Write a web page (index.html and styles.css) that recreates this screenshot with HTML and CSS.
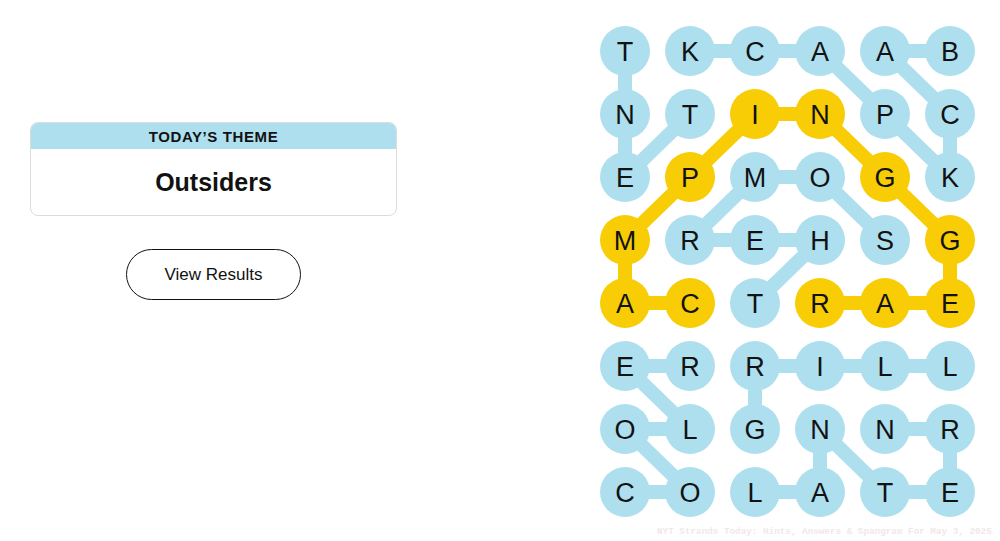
FILE: index.html
```html
<!DOCTYPE html>
<html lang="en">
<head>
<meta charset="utf-8">
<title>Strands</title>
<link rel="stylesheet" href="styles.css">
</head>
<body>
<div class="page">
  <section class="side">
    <div class="theme-card">
      <div class="theme-head">TODAY’S THEME</div>
      <div class="theme-body">Outsiders</div>
    </div>
    <button class="results-btn">View Results</button>
  </section>
  <section class="board">
    <svg class="grid" width="405" height="524" viewBox="0 0 405 524">
      <g class="links-blue">
        <line x1="30" y1="51" x2="30" y2="114"/>
        <line x1="95" y1="51" x2="160" y2="51"/>
        <line x1="160" y1="51" x2="225" y2="51"/>
        <line x1="225" y1="51" x2="290" y2="114"/>
        <line x1="290" y1="51" x2="355" y2="51"/>
        <line x1="290" y1="51" x2="355" y2="114"/>
        <line x1="30" y1="114" x2="30" y2="177"/>
        <line x1="95" y1="114" x2="30" y2="177"/>
        <line x1="290" y1="114" x2="355" y2="177"/>
        <line x1="355" y1="114" x2="355" y2="177"/>
        <line x1="160" y1="177" x2="225" y2="177"/>
        <line x1="160" y1="177" x2="95" y2="240"/>
        <line x1="225" y1="177" x2="290" y2="240"/>
        <line x1="95" y1="240" x2="160" y2="240"/>
        <line x1="160" y1="240" x2="225" y2="240"/>
        <line x1="225" y1="240" x2="160" y2="303"/>
        <line x1="30" y1="366" x2="95" y2="366"/>
        <line x1="30" y1="366" x2="95" y2="429"/>
        <line x1="160" y1="366" x2="355" y2="366"/>
        <line x1="160" y1="366" x2="160" y2="429"/>
        <line x1="30" y1="429" x2="95" y2="429"/>
        <line x1="30" y1="429" x2="95" y2="492"/>
        <line x1="225" y1="429" x2="225" y2="492"/>
        <line x1="225" y1="429" x2="290" y2="492"/>
        <line x1="290" y1="429" x2="355" y2="429"/>
        <line x1="355" y1="429" x2="355" y2="492"/>
        <line x1="30" y1="492" x2="95" y2="492"/>
        <line x1="160" y1="492" x2="225" y2="492"/>
        <line x1="290" y1="492" x2="355" y2="492"/>
      </g>
      <polyline class="link-gold" points="95,303 30,303 30,240 95,177 160,114 225,114 290,177 355,240 355,303 290,303 225,303"/>
      <g class="cells">
        <circle cx="30" cy="51" r="25"/><circle cx="95" cy="51" r="25"/><circle cx="160" cy="51" r="25"/><circle cx="225" cy="51" r="25"/><circle cx="290" cy="51" r="25"/><circle cx="355" cy="51" r="25"/>
        <circle cx="30" cy="114" r="25"/><circle cx="95" cy="114" r="25"/><circle class="gold" cx="160" cy="114" r="25"/><circle class="gold" cx="225" cy="114" r="25"/><circle cx="290" cy="114" r="25"/><circle cx="355" cy="114" r="25"/>
        <circle cx="30" cy="177" r="25"/><circle class="gold" cx="95" cy="177" r="25"/><circle cx="160" cy="177" r="25"/><circle cx="225" cy="177" r="25"/><circle class="gold" cx="290" cy="177" r="25"/><circle cx="355" cy="177" r="25"/>
        <circle class="gold" cx="30" cy="240" r="25"/><circle cx="95" cy="240" r="25"/><circle cx="160" cy="240" r="25"/><circle cx="225" cy="240" r="25"/><circle cx="290" cy="240" r="25"/><circle class="gold" cx="355" cy="240" r="25"/>
        <circle class="gold" cx="30" cy="303" r="25"/><circle class="gold" cx="95" cy="303" r="25"/><circle cx="160" cy="303" r="25"/><circle class="gold" cx="225" cy="303" r="25"/><circle class="gold" cx="290" cy="303" r="25"/><circle class="gold" cx="355" cy="303" r="25"/>
        <circle cx="30" cy="366" r="25"/><circle cx="95" cy="366" r="25"/><circle cx="160" cy="366" r="25"/><circle cx="225" cy="366" r="25"/><circle cx="290" cy="366" r="25"/><circle cx="355" cy="366" r="25"/>
        <circle cx="30" cy="429" r="25"/><circle cx="95" cy="429" r="25"/><circle cx="160" cy="429" r="25"/><circle cx="225" cy="429" r="25"/><circle cx="290" cy="429" r="25"/><circle cx="355" cy="429" r="25"/>
        <circle cx="30" cy="492" r="25"/><circle cx="95" cy="492" r="25"/><circle cx="160" cy="492" r="25"/><circle cx="225" cy="492" r="25"/><circle cx="290" cy="492" r="25"/><circle cx="355" cy="492" r="25"/>
      </g>
      <g class="letters">
        <text x="30" y="61">T</text><text x="95" y="61">K</text><text x="160" y="61">C</text><text x="225" y="61">A</text><text x="290" y="61">A</text><text x="355" y="61">B</text>
        <text x="30" y="124">N</text><text x="95" y="124">T</text><text x="160" y="124">I</text><text x="225" y="124">N</text><text x="290" y="124">P</text><text x="355" y="124">C</text>
        <text x="30" y="187">E</text><text x="95" y="187">P</text><text x="160" y="187">M</text><text x="225" y="187">O</text><text x="290" y="187">G</text><text x="355" y="187">K</text>
        <text x="30" y="250">M</text><text x="95" y="250">R</text><text x="160" y="250">E</text><text x="225" y="250">H</text><text x="290" y="250">S</text><text x="355" y="250">G</text>
        <text x="30" y="313">A</text><text x="95" y="313">C</text><text x="160" y="313">T</text><text x="225" y="313">R</text><text x="290" y="313">A</text><text x="355" y="313">E</text>
        <text x="30" y="376">E</text><text x="95" y="376">R</text><text x="160" y="376">R</text><text x="225" y="376">I</text><text x="290" y="376">L</text><text x="355" y="376">L</text>
        <text x="30" y="439">O</text><text x="95" y="439">L</text><text x="160" y="439">G</text><text x="225" y="439">N</text><text x="290" y="439">N</text><text x="355" y="439">R</text>
        <text x="30" y="502">C</text><text x="95" y="502">O</text><text x="160" y="502">L</text><text x="225" y="502">A</text><text x="290" y="502">T</text><text x="355" y="502">E</text>
      </g>
    </svg>
    <div class="watermark">NYT Strands Today: Hints, Answers &amp; Spangram For May 3, 2025</div>
  </section>
</div>
</body>
</html>
```
FILE: styles.css
```css
html, body {
  margin: 0;
  padding: 0;
  background: #ffffff;
}

body {
  width: 1000px;
  height: 541px;
  overflow: hidden;
  font-family: "Liberation Sans", Arial, sans-serif;
  color: #121212;
}

.page {
  display: flex;
  align-items: flex-start;
  height: 541px;
}

.side {
  width: 367px;
  margin-left: 30px;
  padding-top: 122px;
  display: flex;
  flex-direction: column;
  align-items: center;
}

.theme-card {
  width: 367px;
  box-sizing: border-box;
  border: 1px solid #dcdcdc;
  border-radius: 8px;
  overflow: hidden;
}

.theme-head {
  background: #aedfee;
  height: 26px;
  line-height: 27px;
  text-align: center;
  font-size: 15px;
  font-weight: 700;
  letter-spacing: 0.6px;
  color: #121212;
}

.theme-body {
  height: 66px;
  box-sizing: border-box;
  padding-top: 18px;
  line-height: 30px;
  text-align: center;
  font-size: 25px;
  font-weight: 700;
  color: #121212;
}

.results-btn {
  margin-top: 33px;
  width: 175px;
  height: 51px;
  box-sizing: border-box;
  border: 1.5px solid #121212;
  border-radius: 26px;
  background: #ffffff;
  font-family: "Liberation Sans", Arial, sans-serif;
  font-size: 17px;
  color: #121212;
  padding: 0;
}

.board {
  margin-left: auto;
  width: 405px;
  display: flex;
  flex-direction: column;
}

.grid {
  display: block;
}

.links-blue line {
  stroke: #aedfee;
  stroke-width: 14;
}

.link-gold {
  fill: none;
  stroke: #f8cd05;
  stroke-width: 14;
  stroke-linejoin: round;
}

.cells circle {
  fill: #aedfee;
}

.cells circle.gold {
  fill: #f8cd05;
}

.letters text {
  font-family: "Liberation Sans", Arial, sans-serif;
  font-size: 27px;
  fill: #121212;
  text-anchor: middle;
}

.watermark {
  padding-left: 62px;
  white-space: nowrap;
  font-family: "Liberation Mono", monospace;
  font-weight: 700;
  font-size: 9.3px;
  line-height: 16px;
  color: #f1e8e8;
}
```
